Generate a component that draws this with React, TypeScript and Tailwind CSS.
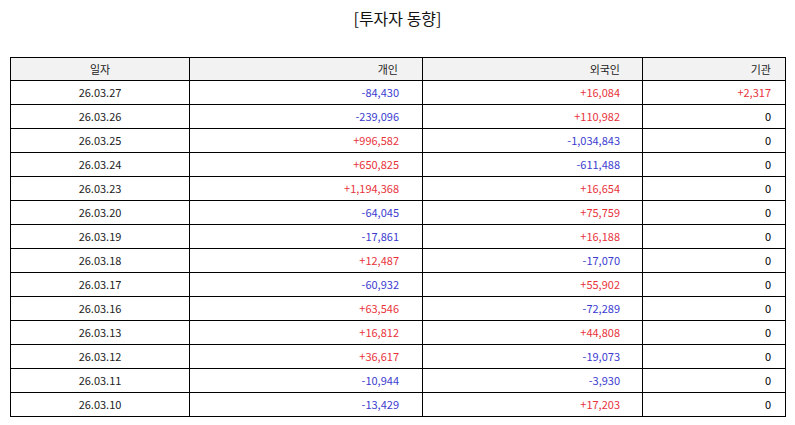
import React from "react";

type Row = { date: string; personal: string; foreign: string; inst: string };

const rows: Row[] = [
  { date: "26.03.27", personal: "-84,430", foreign: "+16,084", inst: "+2,317" },
  { date: "26.03.26", personal: "-239,096", foreign: "+110,982", inst: "0" },
  { date: "26.03.25", personal: "+996,582", foreign: "-1,034,843", inst: "0" },
  { date: "26.03.24", personal: "+650,825", foreign: "-611,488", inst: "0" },
  { date: "26.03.23", personal: "+1,194,368", foreign: "+16,654", inst: "0" },
  { date: "26.03.20", personal: "-64,045", foreign: "+75,759", inst: "0" },
  { date: "26.03.19", personal: "-17,861", foreign: "+16,188", inst: "0" },
  { date: "26.03.18", personal: "+12,487", foreign: "-17,070", inst: "0" },
  { date: "26.03.17", personal: "-60,932", foreign: "+55,902", inst: "0" },
  { date: "26.03.16", personal: "+63,546", foreign: "-72,289", inst: "0" },
  { date: "26.03.13", personal: "+16,812", foreign: "+44,808", inst: "0" },
  { date: "26.03.12", personal: "+36,617", foreign: "-19,073", inst: "0" },
  { date: "26.03.11", personal: "-10,944", foreign: "-3,930", inst: "0" },
  { date: "26.03.10", personal: "-13,429", foreign: "+17,203", inst: "0" },
];

// plus = red, minus = blue, zero stays dark
function tone(v: string) {
  if (v.startsWith("+")) return "text-[#e8333b]";
  if (v.startsWith("-")) return "text-[#3b3bd0]";
  return "text-black";
}

export default function App() {
  return (
    <div
      className="w-[795px] h-[425px] bg-white text-[#222222]"
      style={{ fontFamily: '"Noto Sans CJK KR", "Noto Sans", sans-serif' }}
    >
      <h1 className="pt-[6px] h-[57px] text-center text-[16px] leading-[24px] font-normal text-[#111111]">
        [투자자 동향]
      </h1>
      <table className="ml-[10px] w-[775px] border-collapse table-fixed text-[11px]">
        <colgroup>
          <col className="w-[179px]" />
          <col className="w-[233px]" />
          <col className="w-[220px]" />
          <col className="w-[143px]" />
        </colgroup>
        <thead>
          <tr className="bg-[#f2f2f2] h-[23px]">
            <th className="border border-black font-normal text-center">일자</th>
            <th className="border border-black font-normal text-right pr-[24px]">개인</th>
            <th className="border border-black font-normal text-right pr-[22px]">외국인</th>
            <th className="border border-black font-normal text-right pr-[14px]">기관</th>
          </tr>
        </thead>
        <tbody>
          {rows.map((r) => (
            <tr key={r.date} className="h-[24px]">
              <td className="border border-black text-center">{r.date}</td>
              <td className={`border border-black text-right pr-[23px] ${tone(r.personal)}`}>{r.personal}</td>
              <td className={`border border-black text-right pr-[22px] ${tone(r.foreign)}`}>{r.foreign}</td>
              <td className={`border border-black text-right pr-[14px] ${tone(r.inst)}`}>{r.inst}</td>
            </tr>
          ))}
        </tbody>
      </table>
    </div>
  );
}
